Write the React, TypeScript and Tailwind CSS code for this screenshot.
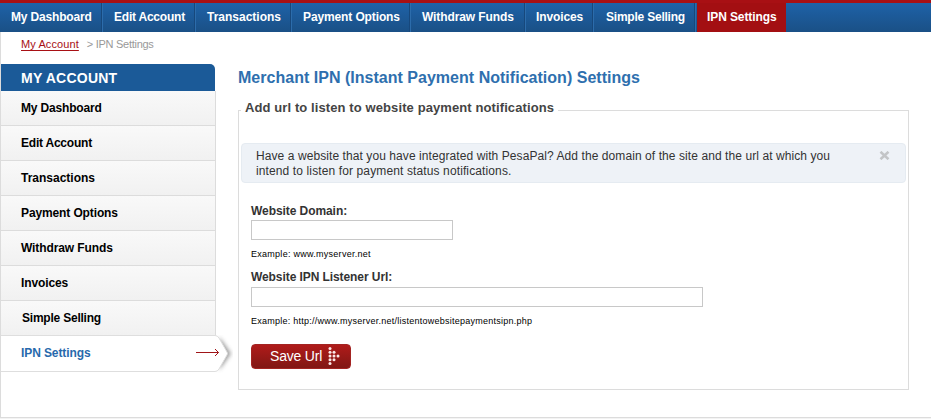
import React from "react";

const nav = [
  { label: "My Dashboard", box: "w-[103px] pl-[11px] tracking-[-0.17px]" },
  { label: "Edit Account", box: "w-[93px] pl-[11px] tracking-[-0.22px]" },
  { label: "Transactions", box: "w-[96px] pl-[11px]" },
  { label: "Payment Options", box: "w-[119px] pl-[11px] tracking-[-0.12px]" },
  { label: "Withdraw Funds", box: "w-[115px] pl-[11px] tracking-[-0.1px]" },
  { label: "Invoices", box: "w-[68px] pl-[10px] tracking-[-0.12px]" },
  { label: "Simple Selling", box: "w-[102px] pl-[12px] tracking-[-0.22px]" },
];

const side = [
  { label: "My Dashboard", style: "pl-5 tracking-[-0.17px]" },
  { label: "Edit Account", style: "pl-5 tracking-[-0.22px]" },
  { label: "Transactions", style: "pl-5" },
  { label: "Payment Options", style: "pl-5 tracking-[-0.12px]" },
  { label: "Withdraw Funds", style: "pl-5 tracking-[-0.1px]" },
  { label: "Invoices", style: "pl-5 tracking-[-0.12px]" },
  { label: "Simple Selling", style: "pl-[21px] tracking-[-0.22px]" },
];

const dots = [
  [2, 1.5], [2, 5.25], [2, 9], [2, 12.75], [2, 16.5],
  [6, 5.25], [6, 9], [6, 12.75],
  [10, 9],
];

function TopNav() {
  return (
    <nav className="flex h-8 border-t-[3px] border-[#a81014] bg-linear-to-b from-[#1e62a8] to-[#1a5086] text-[12px] leading-[29px] font-bold text-white">
      {nav.map((n) => (
        <a
          key={n.label}
          className={`block h-[29px] shrink-0 border-r border-[#2c6cab] shadow-[inset_-1px_0_0_#17487c] whitespace-nowrap ${n.box}`}
        >
          {n.label}
        </a>
      ))}
      <a className="ml-px block h-[29px] w-[89px] shrink-0 bg-[#a30f12] pl-[10px] tracking-[-0.1px] whitespace-nowrap">
        IPN Settings
      </a>
    </nav>
  );
}

function Sidebar() {
  return (
    <aside className="w-[237px] shrink-0">
      <h2 className="h-[27px] w-[214px] rounded-tr-[5px] bg-[#1b5a98] pl-5 text-[14px] leading-[28px] font-bold tracking-[0.22px] text-white">
        MY ACCOUNT
      </h2>
      <ul className="w-[215px] border-r border-[#dcdcdc] text-[12px] leading-[34px] font-bold text-black">
        {side.map((s) => (
          <li
            key={s.label}
            className={`h-[35px] border-b border-[#dcdcdc] bg-linear-to-b from-[#f9f9f9] to-[#f1f1f1] ${s.style}`}
          >
            {s.label}
          </li>
        ))}
      </ul>
      <div className="relative h-[36px] text-[12px] leading-[34px] font-bold text-[#2769ac]">
        <svg className="absolute -top-px left-0" width="232" height="38" viewBox="0 0 232 38">
          <defs>
            <filter id="soft" x="-50%" y="-50%" width="200%" height="200%">
              <feGaussianBlur stdDeviation="2" />
            </filter>
          </defs>
          <path d="M218 2 L230 18.500 L218 35 Z" fill="#888" opacity="0.85" filter="url(#soft)" />
          <path d="M0 0.5 H214 Q216.500 0.500 218 3 L226 17 Q227 18.500 226 20 L218 34 Q216.500 36.500 214 36.500 H0 Z" fill="#fff" />
          <path d="M0 .5 H214 Q216.500 .5 218 3 L226 17 Q227 18.500 226 20 L218 34 Q216.500 36.500 214 36.500 H0" fill="none" stroke="#dedede" />
          <path d="M195 17.500 H217.500 M214 14 L217.500 17.500 L214 21" fill="none" stroke="#a01518" />
        </svg>
        <span className="relative pl-5 tracking-[-0.1px]">IPN Settings</span>
      </div>
    </aside>
  );
}

function IpnForm() {
  return (
    <main className="w-[671px] shrink-0">
      <h1 className="h-[40px] pt-[3px] text-[16px] leading-[21px] font-bold tracking-[0.02px] whitespace-nowrap text-[#2e6fae]">
        Merchant IPN (Instant Payment Notification) Settings
      </h1>
      <fieldset className="-mt-1 h-[290px] min-w-0 border border-[#dcdcdc] px-[2px]">
        <legend className="h-[20px] px-[4px] text-[13px] leading-[16px] font-bold tracking-[0.1px] whitespace-nowrap text-[#444]">
          Add url to listen to website payment notifications
        </legend>
        <div className="mt-[23px] flex h-[40px] w-[665px] justify-between rounded-[4px] border border-[#e5ebf1] bg-[#eef2f7] pr-[15px] pl-[14px] text-[12px] leading-[15px] text-[#333]">
          <p className="pt-[5px] tracking-[0.08px] whitespace-nowrap">
            Have a website that you have integrated with PesaPal? Add the domain of the site and the url at which you
            <br />
            <span className="tracking-[0.12px]">intend to listen for payment status notifications.</span>
          </p>
          <svg className="mt-[7px]" width="11" height="9" viewBox="0 0 11 9">
            <path d="M1.500 .8 L9.500 8.200 M9.500 .8 L1.500 8.200" stroke="#c3c5c7" strokeWidth="2.600" />
          </svg>
        </div>
        <div className="flex flex-col items-start pl-[10px]">
          <label className="mt-[20px] h-[17px] text-[12px] leading-[16px] font-bold tracking-[-0.07px] text-[#333]">
            Website Domain:
          </label>
          <input className="h-5 w-[202px] border border-[#c8c8c8] bg-white" />
          <p className="mt-[7px] h-[14px] text-[9px] leading-[14px] tracking-[0.27px] text-black">
            Example: www.myserver.net
          </p>
          <label className="mt-[8px] h-[18px] text-[12px] leading-[16px] font-bold tracking-[-0.08px] text-[#333]">
            Website IPN Listener Url:
          </label>
          <input className="h-5 w-[452px] border border-[#c8c8c8] bg-white" />
          <p className="mt-[7px] h-[14px] text-[9px] leading-[14px] tracking-[0.25px] text-black">
            Example: http://www.myserver.net/listentowebsitepaymentsipn.php
          </p>
          <button className="mt-[16px] flex h-[25px] w-[100px] rounded-[4px] border border-[#a32422] bg-linear-to-b from-[#b01b1a] to-[#811714] pl-[18px] text-left text-[14px] leading-[23px] tracking-[-0.2px] whitespace-nowrap text-white">
            <span className="w-[58px]">Save Url</span>
            <svg className="mt-[2px]" width="12" height="18" viewBox="0 0 12 18">
              {dots.map(([x, y]) => (
                <circle key={`${x}-${y}`} cx={x} cy={y} r="1.500" fill="#fbe9e8" />
              ))}
            </svg>
          </button>
        </div>
      </fieldset>
    </main>
  );
}

export default function App() {
  return (
    <div className="h-[419px] w-[931px] overflow-hidden bg-white font-['Liberation_Sans',Arial,sans-serif]">
      <TopNav />
      <div className="h-[386px] border-b border-l border-[#dcdcdc]">
        <div className="flex h-8 pl-5 text-[11px] leading-[24px] text-[#999]">
          <a className="tracking-[0.1px] text-[#a81014] underline underline-offset-2">My Account</a>
          <span className="pl-[8px] tracking-[-0.28px]">&gt; IPN Settings</span>
        </div>
        <div className="flex">
          <Sidebar />
          <IpnForm />
        </div>
      </div>
      <div className="h-px bg-[#f3f3f3]" />
    </div>
  );
}
